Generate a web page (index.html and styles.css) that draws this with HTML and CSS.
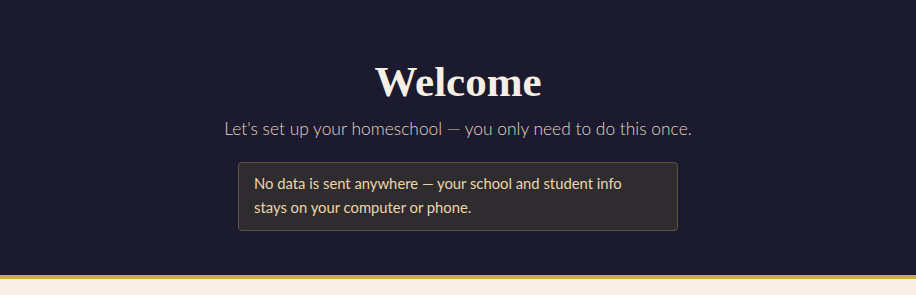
FILE: index.html
```html
<!DOCTYPE html>
<html lang="en">
<head>
  <meta charset="UTF-8">
  <meta name="viewport" content="width=device-width, initial-scale=1.0">
  <title>Welcome</title>
  <link rel="stylesheet" href="styles.css">
</head>
<body>

<!-- Intro banner -->
<header class="welcome">
  <h1 class="welcome-title">Welcome</h1>
  <p class="welcome-lead">Let's set up your homeschool — you only need to do this once.</p>
  <div class="privacy-note">
    No data is sent anywhere — your school and student info stays on your computer or phone.
  </div>
</header>

<!-- Setup steps go here -->
<main class="setup"></main>

</body>
</html>
```

FILE: styles.css
```css
/* General styles */
body {
  margin: 0;
  font-family: Lato, "Noto Sans", sans-serif;
  background-color: #f7eee5;
}

/* Intro banner */
.welcome {
  display: flex;
  flex-direction: column;
  align-items: center;
  height: 275px;
  background-color: #1c1a2e;
  border-bottom: 4px solid #c9a95a;
}

.welcome-title {
  margin: 57px 0 0;
  font-family: "Liberation Serif", serif;
  font-size: 43px;
  line-height: 50px;
  font-weight: bold;
  color: #f7efe4;
}

.welcome-lead {
  margin: 10px 0 0;
  font-size: 17.4px;
  font-weight: 300;
  line-height: 24px;
  color: #e4d6be;
}

/* Privacy note */
.privacy-note {
  width: 440px;
  box-sizing: border-box;
  margin-top: 21px;
  padding: 8px 40px 11px 15px;
  background-color: #2f2c30;
  border: 1px solid #5e5444;
  border-radius: 4px;
  font-size: 14.8px;
  line-height: 24px;
  color: #ecd6a8;
}

.setup {
  min-height: 16px;
}
```
